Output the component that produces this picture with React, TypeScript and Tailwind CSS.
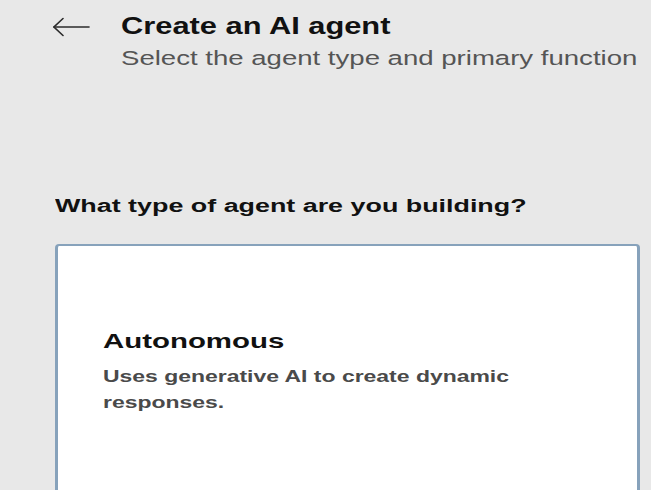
export default function App() {
  return (
    <div className="h-[490px] w-full overflow-hidden bg-[#e8e8e8] font-['Liberation_Sans',Arial,sans-serif]">
      <div className="flex items-start pl-[53px] pt-[12px]">
        <svg
          width="37"
          height="20"
          viewBox="0 0 37 20"
          className="mt-[5px] shrink-0 text-[#2b2b2b]"
          fill="none"
          stroke="currentColor"
          strokeWidth="1.6"
          strokeLinecap="round"
        >
          <path d="M1 10 H36" />
          <path d="M10 1.5 L1 10 L10 18.5" />
        </svg>
        <div className="ml-[31px]">
          <h1 className="origin-left scale-x-[1.34] text-[23px] font-bold leading-[28px] text-[#111]">
            Create an AI agent
          </h1>
          <p className="mt-[6px] origin-left scale-x-[1.4] text-[19.7px] leading-[24px] text-[#555]">
            Select the agent type and primary function
          </p>
        </div>
      </div>

      <div className="pl-[55px] pr-[11px] pt-[124px]">
        <h2 className="origin-left scale-x-[1.4] text-[19.2px] font-bold leading-[24px] text-[#111]">
          What type of agent are you building?
        </h2>
        <div className="mt-[26px] h-[260px] rounded-[4px] border-x-[3px] border-t-2 border-[#87a2bb] bg-white pl-[45px] pt-[81px]">
          <h3 className="origin-left scale-x-[1.4] text-[21px] font-bold leading-[28px] text-[#111]">
            Autonomous
          </h3>
          <p className="mt-[8px] origin-left scale-x-[1.4] text-[16.4px] font-bold leading-[26px] text-[#4a4a4a]">
            Uses generative AI to create dynamic
            <br />
            responses.
          </p>
        </div>
      </div>
    </div>
  );
}
